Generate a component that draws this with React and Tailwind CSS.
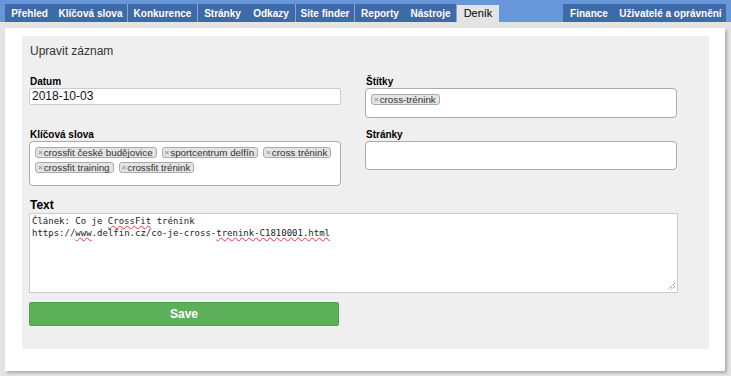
export default function App() {
  const tabs = [
    { t: "Přehled", w: "w-[49px]", sep: false },
    { t: "Klíčová slova", w: "w-[74px]", sep: true },
    { t: "Konkurence", w: "w-[70px]", sep: true },
    { t: "Stránky", w: "w-[49px]", sep: false },
    { t: "Odkazy", w: "w-[49px]", sep: true },
    { t: "Site finder", w: "w-[59px]", sep: true },
    { t: "Reporty", w: "w-[50px]", sep: false },
    { t: "Nástroje", w: "w-[52px]", sep: true },
  ];
  return (
    <div className="w-[731px] h-[376px] overflow-hidden bg-[#e4e4e4] font-['Liberation_Sans',Arial,sans-serif]">
      {/* nav */}
      <div className="h-[22px] bg-[#6797d8] flex items-end pl-[5px] pr-[5px]">
        {tabs.map((x) => (
          <div
            key={x.t}
            className={`${x.w} h-[18px] flex items-center justify-center bg-[#3e6aa9] text-white text-[10px] font-bold whitespace-nowrap ${x.sep ? "border-r border-[#82a6d9]" : ""}`}
          >
            {x.t}
          </div>
        ))}
        <div className="w-[42px] h-[17px] flex items-center justify-center bg-[#e4e4e4] text-black text-[11px]">
          Deník
        </div>
        <div className="ml-auto flex">
          <div className="w-[52px] h-[18px] flex items-center justify-center bg-[#3e6aa9] text-white text-[10px] font-bold">
            Finance
          </div>
          <div className="w-[111px] h-[18px] flex items-center justify-center bg-[#3e6aa9] text-white text-[10px] font-bold whitespace-nowrap">
            Uživatelé a oprávnění
          </div>
        </div>
      </div>

      {/* card */}
      <div className="mt-[6px] ml-[5px] w-[720px] bg-white pt-[8px] pl-[17px] pr-[16px] pb-[22px] shadow-[2px_2px_3px_rgba(0,0,0,0.25)]">
        <div className="h-[313px] bg-[#efefef] pl-[7px] pt-[8px]">
          <div className="text-[12px] leading-[14px] text-[#333] pl-[1px]">Upravit záznam</div>

          <div className="mt-[18px] grid grid-cols-[312px_312px] gap-x-[24px] gap-y-[11px]">
            <div>
              <Label>Datum</Label>
              <div className="h-[17px] border border-[#ccc] rounded-[2px] bg-white pl-[2px] text-[12px] leading-[15px] text-[#111]">
                2018-10-03
              </div>
            </div>
            <div>
              <Label>Štítky</Label>
              <div className="h-[30px] border border-[#aaa] rounded-[4px] bg-white pl-[5px] pt-[5px] flex items-start">
                <Tag>cross-trénink</Tag>
              </div>
            </div>
            <div>
              <Label>Klíčová slova</Label>
              <div className="h-[45px] border border-[#aaa] rounded-[4px] bg-white pl-[5px] pt-[5px] flex flex-wrap content-start gap-x-[5px] gap-y-[4px]">
                <Tag>crossfit české budějovice</Tag>
                <Tag>sportcentrum delfín</Tag>
                <Tag>cross trénink</Tag>
                <Tag>crossfit training</Tag>
                <Tag>crossfit trénink</Tag>
              </div>
            </div>
            <div>
              <Label>Stránky</Label>
              <div className="h-[29px] border border-[#aaa] rounded-[4px] bg-white" />
            </div>
          </div>

          <div className="mt-[12px] text-[12px] leading-[14px] font-bold text-black pl-[1px]">Text</div>
          <div className="mt-[1px] w-[649px] h-[80px] border border-[#ccc] bg-white relative pl-[2px] pt-[1px] font-['DejaVu_Sans_Mono',monospace] text-[9px] leading-[12px] text-[#222] whitespace-pre">
            <div>
              Článek: Co je <Sq>CrossFit</Sq> trénink
            </div>
            <div>
              https://<Sq>www</Sq>.delfin.cz/co-je-cross-<Sq>trenink-C1810001.html</Sq>
            </div>
            <svg className="absolute right-[1px] bottom-[1px]" width="9" height="9" viewBox="0 0 9 9">
              <path d="M8 1 L1 8 M8 4 L4 8" stroke="#666" strokeWidth="1" strokeDasharray="1 1" />
            </svg>
          </div>

          <button className="mt-[9px] w-[310px] h-[24px] bg-[#5cb05a] border border-[#4ea34c] rounded-[2px] text-white text-[12px] font-bold flex items-center justify-center">
            Save
          </button>
        </div>
      </div>
    </div>
  );
}

function Label({ children }) {
  return <div className="text-[10px] leading-[12px] font-bold text-black pl-[1px]">{children}</div>;
}

function Tag({ children }) {
  return (
    <span className="inline-flex items-center h-[11px] border border-[#aaa] bg-[#e4e4e4] rounded-[3px] pl-[2px] pr-[3px] text-[9.8px] leading-[9px] text-[#333] whitespace-nowrap">
      <span className="text-[#999] text-[8px] font-bold mr-[1px]">×</span>
      {children}
    </span>
  );
}

function Sq({ children }) {
  return (
    <span className="underline decoration-wavy decoration-[#e33] decoration-1 underline-offset-[1px]">{children}</span>
  );
}
